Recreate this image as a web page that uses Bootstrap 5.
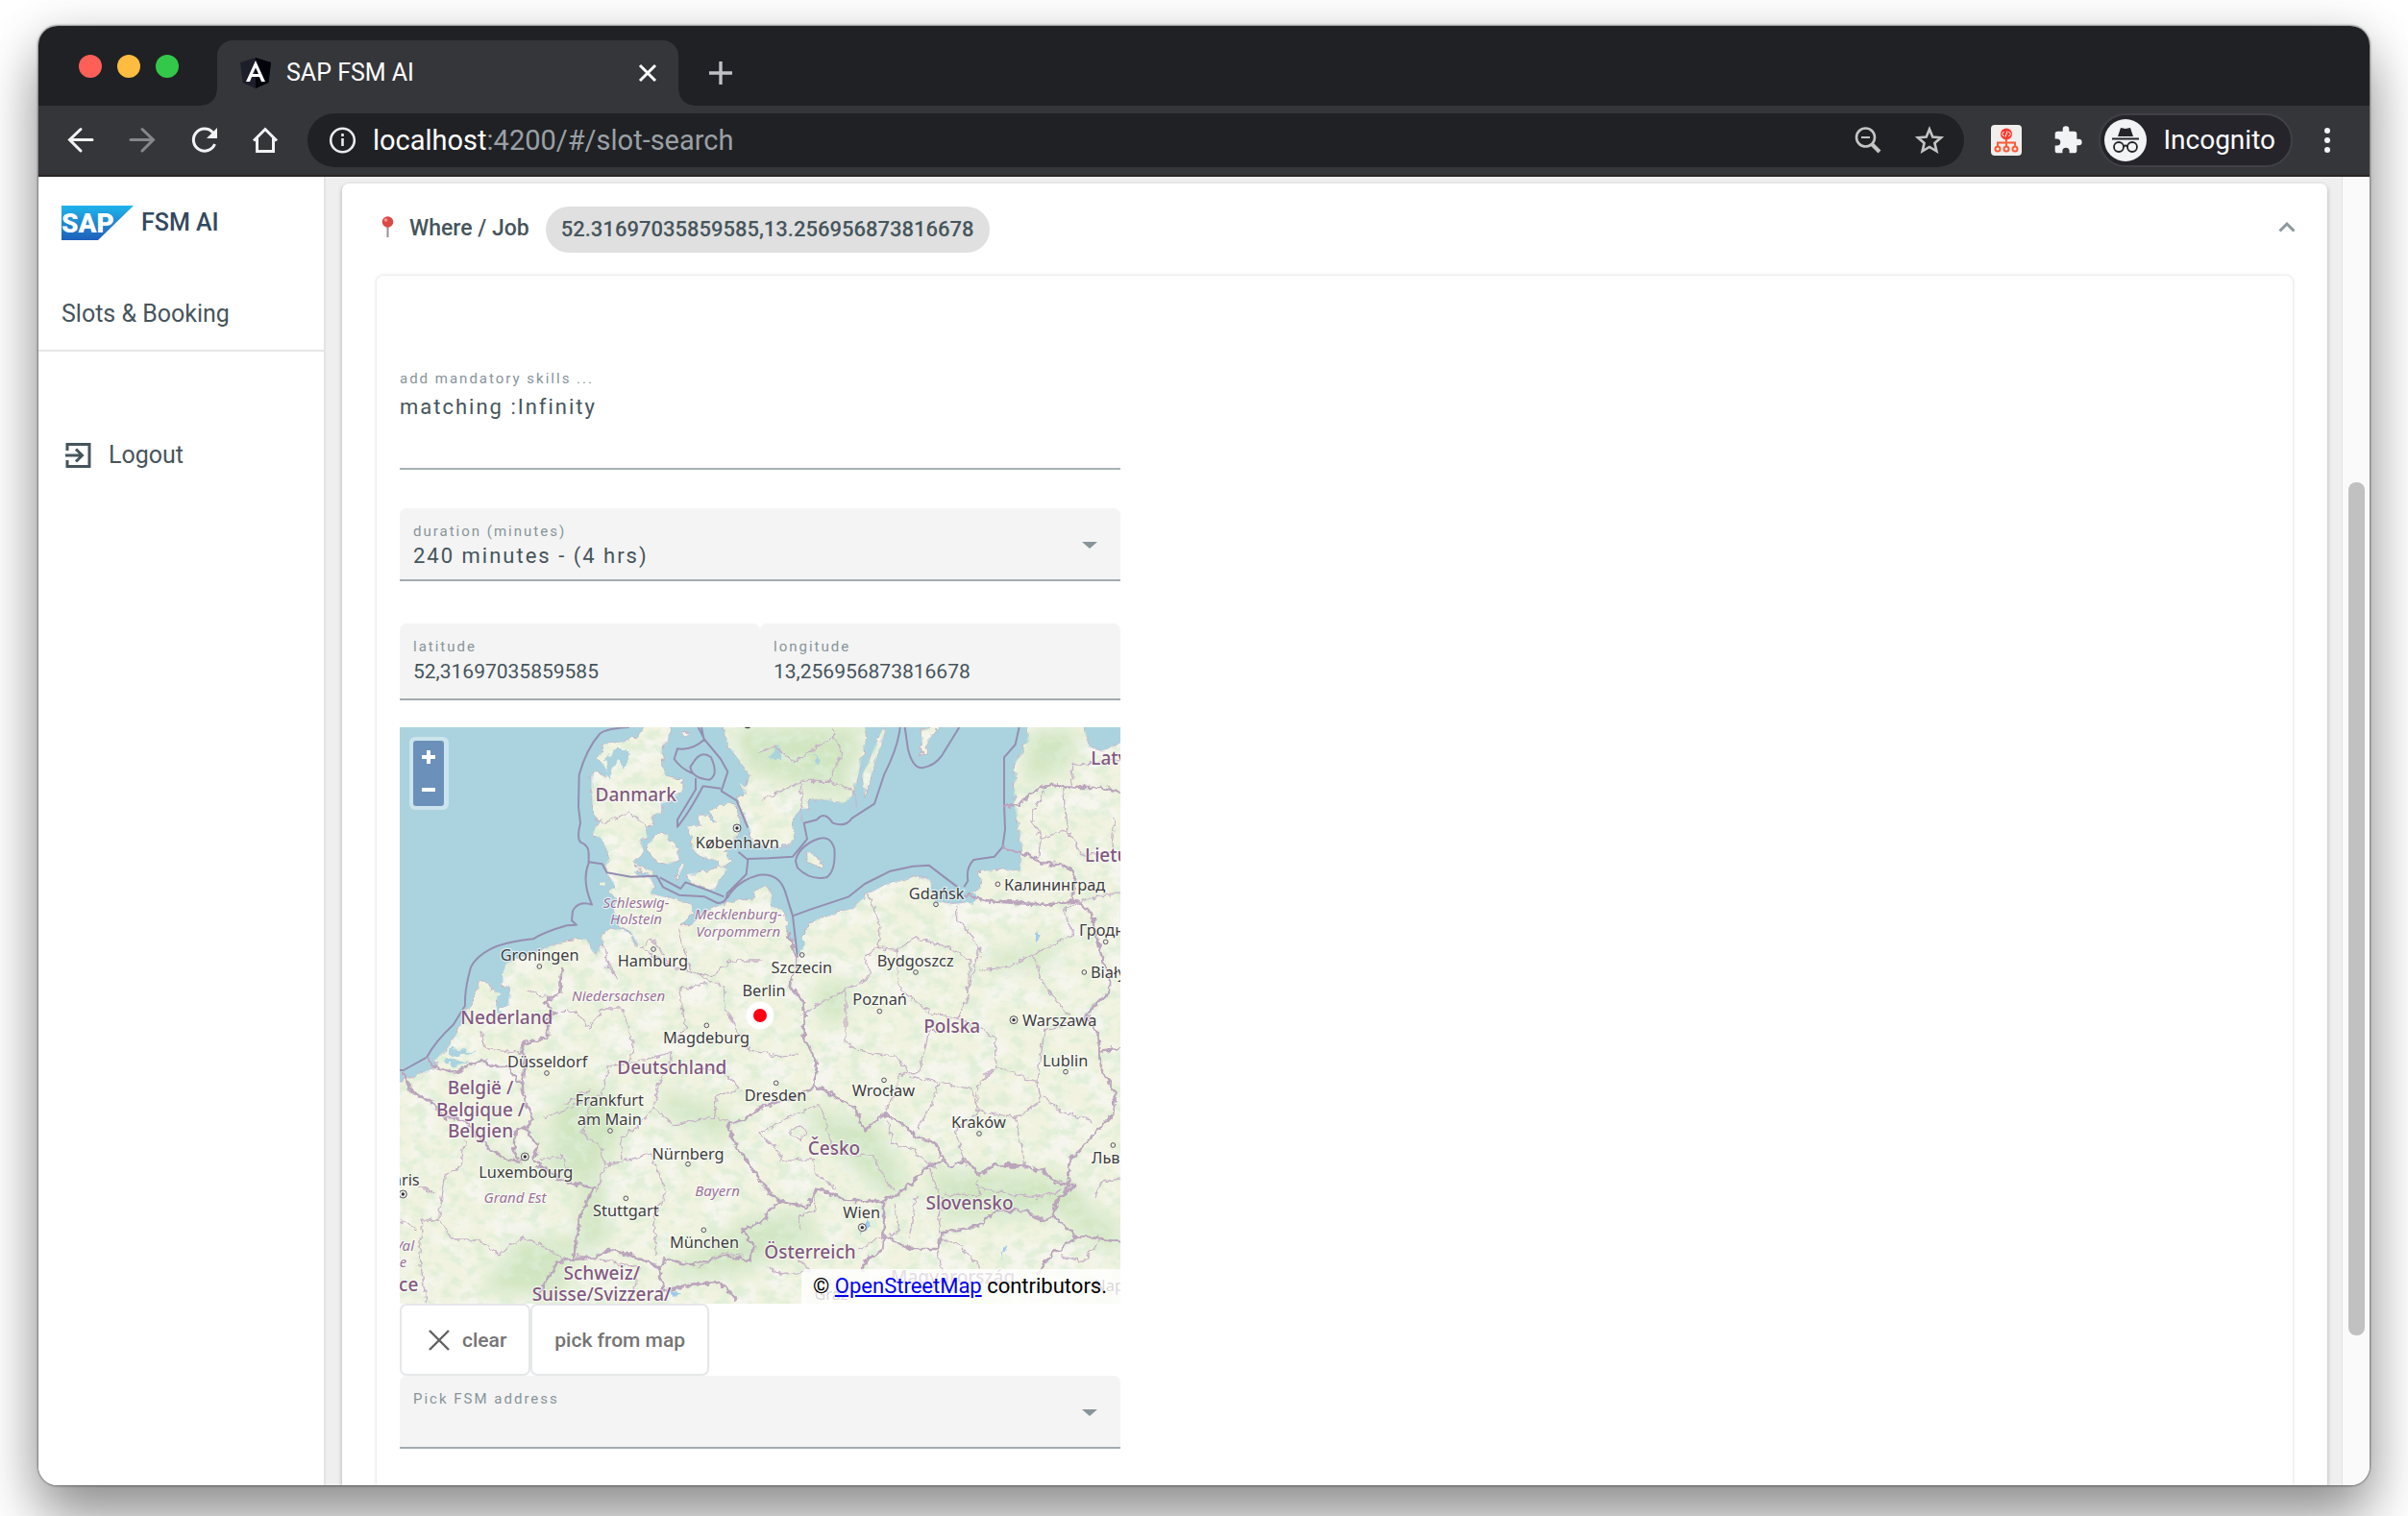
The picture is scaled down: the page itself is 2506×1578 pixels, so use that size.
<!DOCTYPE html>
<html lang="en">
<head>
<meta charset="utf-8">
<meta name="viewport" content="width=device-width, initial-scale=1">
<title>SAP FSM AI</title>
<link href="https://cdn.jsdelivr.net/npm/bootstrap@5.3.0/dist/css/bootstrap.min.css" rel="stylesheet">
<style>
body{font-family:Roboto,"Noto Sans",sans-serif;font-size:24px;line-height:32px;color:#46555c;background:#fff}
svg{display:block;flex:none}
.desk{height:100vh;padding:27px 40px 32px;overflow:hidden}
.win{border-radius:20px;overflow:hidden;background:#fff;box-shadow:0 0 2px 1px rgba(0,0,0,.4),0 36px 60px rgba(0,0,0,.38),0 6px 50px rgba(0,0,0,.14)}
.tabstrip{height:83px;background:#202124}
.lights{gap:16px;padding:30px 40px 0 42px}
.lights button{width:24px;height:24px;border:0;border-radius:50%;padding:0}
.l-close{background:#ff5f57}.l-min{background:#febc40}.l-max{background:#34c84a}
.btab{position:relative;width:480px;height:68px;background:#35363a;border-radius:16px 16px 0 0;color:#fff;padding:0 20px 0 24px;gap:16px;font-size:25px}
.btab::before,.btab::after{content:"";position:absolute;bottom:0;width:16px;height:16px}
.btab::before{left:-16px;background:radial-gradient(circle at 0 0,transparent 15px,#35363a 16px)}
.btab::after{right:-16px;background:radial-gradient(circle at 100% 0,transparent 15px,#35363a 16px)}
.bare{border:0;background:none;padding:0;color:inherit;display:block}
.tools{height:74px;background:#35363a;border-bottom:2px solid #282524;padding:0 32px 0 28px;color:#f1f3f4}
.navs{gap:32px;padding-right:28px}
.omni{height:56px;border-radius:28px;background:#202124;padding:0 20px;gap:16px;font-size:29px}
.host{color:#fff}.path{color:#9aa0a6}
.incog{height:56px;border:2px solid #414046;border-radius:28px;background:#25242a;color:#fff;padding:0 16px 0 4px;gap:17px;font-size:28px}
.side{width:299px;border-right:2px solid #e4e4e4;background:#fff;font-size:25px}
.side a{color:#46555c;text-decoration:none}
.brand{padding:30px 24px 0;gap:8px;color:#33495d;font-weight:500;height:111px}
.brand span{padding-top:2px}
.slots{padding:16px 24px 0;height:71px;border-bottom:2px solid #e6e6e6}
.logout{padding:92px 26px 0;gap:15px}
.stage{background:#efefef;padding:7px 15px 0 17px;overflow:hidden}
.panel{border:0;border-radius:7px 7px 0 0;box-shadow:0 2px 5px rgba(0,0,0,.28);color:#46555c}
.phead{height:96px;flex:none;padding:0 30px 0 37px}
.phead h1{font-size:23px;line-height:30px;font-weight:500;margin:0 17px 2px 14px}
.chip{background:#e0e0e0;height:48px;border-radius:24px;padding:0 16px;font-size:22px;font-weight:500}
.inner{margin:0 36px;border:0;border-radius:7px 7px 0 0;box-shadow:0 0 3px 1px rgba(0,0,0,.1);padding:97px 24px 36px;color:#46555c}
.form{width:100%;max-width:750px}
.fld{background:#f4f4f4;border-bottom:2px solid #a3abaf;border-radius:7px 7px 0 0;padding:14px 24px 0 14px;height:76px}
.fld label,.skill label{display:block;font-size:15px;line-height:20px;letter-spacing:2px;color:#87949a}
.fld select,.fld input,.skill input{display:block;width:100%;border:0;background:none;padding:0;margin:0;appearance:none;outline:0;color:#46555c;font-size:22px;line-height:32px;height:32px}
.fld select,.skill input{letter-spacing:2px}
.fld input{font-size:21px}
.skill{height:105px;border-bottom:2px solid #a8b0b4;margin-bottom:40px}
.skill input{margin-top:4px}
.latlon{margin-top:44px}
.latlon .fld{height:80px}
.map{position:relative;margin-top:28px}
.map>svg{width:100%;height:auto}
.zoomer{position:absolute;left:10px;top:10px;padding:4px 5px 4px 4px;background:rgba(255,255,255,.4);border-radius:6px}
.zoomer button{display:block;width:32px;height:34px;border:0;padding:0;background:#6b91bb;color:#fff}
.zoomer button:first-child{border-radius:3px 3px 0 0}
.zoomer button:last-child{border-radius:0 0 3px 3px}
.zoomer svg{margin:auto}
.attr{position:absolute;right:0;bottom:0;background:rgba(255,255,255,.8);border-radius:6px 0 0 0;padding:0 14px 0 12px;line-height:36px;font-size:22px;color:#000}
.attr a{color:#00e}
.abtn{border:2px solid #e6e7e9;border-radius:7px;background:#fff;color:#757575;font-size:21px;font-weight:500;padding:0 23px;height:75px}
.track{width:29px;background:#fafafa;border-left:1px solid #e2e2e2;padding:318px 5px 0 6px}
.thumb{height:888px;border-radius:8px;background:#c1c1c1}
.cty{font:500 57px "Noto Sans",sans-serif;fill:#825980}
.cit{font:49px "Noto Sans",sans-serif;fill:#3d3d3d}
.rgn{font:italic 45px "Noto Sans",sans-serif;fill:#9a7399}
.map text{paint-order:stroke;stroke:rgba(255,255,255,.65);stroke-width:7px;stroke-linejoin:round;text-anchor:middle}
</style>
<script src="https://cdn.jsdelivr.net/npm/bootstrap@5.3.0/dist/js/bootstrap.bundle.min.js"></script>
</head>
<body>
<div class="desk">
<div class="win d-flex flex-column h-100">
  <header>
    <div class="tabstrip d-flex">
      <div class="lights d-flex"><button class="l-close" aria-label="Close"></button><button class="l-min" aria-label="Minimize"></button><button class="l-max" aria-label="Maximize"></button></div>
      <div class="btab d-flex align-items-center align-self-end">
        <svg width="32" height="32" viewBox="0 0 32 32"><path fill="#1c1f2a" d="M16 0 32 5 29.500 26 16 32 2.500 26 0 5z"/><path fill="#02040b" d="M16 0 32 5 29.500 26 16 32z"/><path fill="#fff" d="M16 3 6 25h4l2-5h8l2 5h4zM16 10.500l3 6.500h-6z"/></svg>
        <span class="flex-grow-1">SAP FSM AI</span>
        <button class="bare" aria-label="Close tab"><svg width="24" height="24" viewBox="0 0 24 24" stroke="#fff" stroke-width="3"><path d="M4 4 20 20M20 4 4 20"/></svg></button>
      </div>
      <button class="bare ms-4 mt-4 ps-2 align-self-start" aria-label="New tab"><svg width="24" height="50" viewBox="0 0 24 50" stroke="#bdc1c6" stroke-width="3.4"><path d="M0 25h24M12 13v24"/></svg></button>
    </div>
    <div class="tools d-flex align-items-center">
      <div class="navs d-flex">
        <button class="bare" aria-label="Back"><svg width="32" height="32" viewBox="0 0 32 32" fill="none" stroke="currentColor" stroke-width="3" stroke-linecap="round"><path d="M28 15.500H5M16 4.500 4.500 15.500 16 27"/></svg></button>
        <button class="bare" aria-label="Forward"><svg width="32" height="32" viewBox="0 0 32 32" fill="none" stroke="#85878a" stroke-width="3" stroke-linecap="round"><path d="M4 15.500h23M16 4.500l11.500 11L16 27"/></svg></button>
        <button class="bare" aria-label="Reload"><svg width="32" height="32" viewBox="0 0 32 32" fill="none" stroke="currentColor" stroke-width="3"><path d="M27.500 20A11.500 11.500 0 1 1 25.500 8"/><path fill="currentColor" stroke="none" d="M30 3v11H19z"/></svg></button>
        <button class="bare" aria-label="Home"><svg width="32" height="32" viewBox="0 0 32 32" fill="none" stroke="currentColor" stroke-width="3"><path d="M4 16.500 16 4.500l12 12M7.500 14v13.500h17V14"/></svg></button>
      </div>
      <div class="omni d-flex align-items-center flex-grow-1">
        <svg width="32" height="32" viewBox="0 0 32 32" fill="none" stroke="#e8eaed" stroke-width="2.600"><circle cx="16.500" cy="16" r="12.300"/><path d="M16.500 14v8M16.500 9v3"/></svg>
        <div class="flex-grow-1"><span class="host">localhost</span><span class="path">:4200/#/slot-search</span></div>
        <button class="bare" aria-label="Zoom"><svg width="32" height="32" viewBox="0 0 32 32" fill="none" stroke="#c4c4c5" stroke-width="2.600"><circle cx="13.500" cy="13" r="9.500"/><path d="M20 20l8 8" stroke-width="4"/><path d="M9 13h9" stroke-width="2"/></svg></button>
        <button class="bare ms-3" aria-label="Bookmark"><svg width="32" height="32" viewBox="0 0 32 32" fill="none" stroke="#c4c4c5" stroke-width="2.600"><path d="M16 4.500l3.300 8 8.700.7-6.600 5.700 2 8.500L16 22.900l-7.400 4.500 2-8.500L4 13.200l8.700-.7z"/></svg></button>
      </div>
      <button class="bare ms-4 ps-1" aria-label="Extension"><svg width="32" height="32" viewBox="0 0 32 32"><rect width="32" height="32" rx="4" fill="#f1efed"/><g fill="none" stroke="#ff5a36" stroke-width="2"><path d="M16 14v9M7 23v-4.500h18V23"/><circle cx="7" cy="25" r="2.500"/><circle cx="16" cy="25" r="2.500"/><circle cx="25" cy="25" r="2.500"/></g><circle cx="16" cy="9.500" r="6" fill="#fb3b30"/><path d="M13.500 7 11.500 9.500l2 2.500M18.500 7l2 2.500-2 2.500M17 6.500l-2 6" fill="none" stroke="#fff"/></svg></button>
      <button class="bare ms-4 ps-2" aria-label="Extensions"><svg width="32" height="32" viewBox="0 0 24 24" fill="#f1f3f4"><path d="M20.500 11H19V7a2 2 0 0 0-2-2h-4V3.500a2.500 2.500 0 0 0-5 0V5H4a2 2 0 0 0-2 2v3.800h1.500a2.700 2.700 0 0 1 0 5.400H2V20a2 2 0 0 0 2 2h3.800v-1.500a2.700 2.700 0 0 1 5.400 0V22H17a2 2 0 0 0 2-2v-4h1.500a2.500 2.500 0 0 0 0-5z"/></svg></button>
      <button class="incog d-flex align-items-center ms-3"><svg width="44" height="44" viewBox="0 0 44 44"><circle cx="22" cy="22" r="22" fill="#f1f3f4"/><path fill="#25242a" d="M14 18 17 9l5 1 5-1 3 9z"/><path stroke="#25242a" stroke-width="2" d="M8 20.500h28"/><g fill="none" stroke="#25242a" stroke-width="1.800"><circle cx="15" cy="29" r="5"/><circle cx="29" cy="29" r="5"/><path d="M20 28.500q2-2 4 0"/></g></svg>Incognito</button>
      <button class="bare ms-4" aria-label="Menu"><svg width="24" height="32" viewBox="0 0 24 32" fill="#f1f3f4"><circle cx="12" cy="6" r="3"/><circle cx="12" cy="16" r="3"/><circle cx="12" cy="26" r="3"/></svg></button>
    </div>
  </header>
  <div class="d-flex flex-grow-1 overflow-hidden">
    <nav class="side flex-shrink-0">
      <div class="brand d-flex"><svg width="75" height="36" viewBox="0 0 75 36"><defs><linearGradient id="sg" x2="0" y2="1"><stop stop-color="#1fb4ea"/><stop offset="1" stop-color="#1e5fbb"/></linearGradient></defs><path fill="url(#sg)" d="M0 0h75L38 36H0z"/><text x="0" y="28" font-family="Roboto,sans-serif" font-weight="900" font-size="28" fill="#fff">SAP</text></svg><span>FSM AI</span></div>
      <div class="slots"><a href="#">Slots &amp; Booking</a></div>
      <a class="logout d-flex" href="#"><svg width="32" height="32" viewBox="0 0 32 32" fill="none" stroke="currentColor" stroke-width="3"><path d="M4 11V4.500h23v23H4V21M2 16h17M13 9.500l6.500 6.500-6.500 6.500"/></svg>Logout</a>
    </nav>
    <main class="stage flex-grow-1 d-flex">
      <section class="card panel w-100">
        <div class="phead d-flex align-items-center">
          <svg width="19" height="32" viewBox="0 0 19 32"><path d="M10.500 12v12" stroke="#9b8f8c" stroke-width="2"/><circle cx="10.500" cy="8" r="5.800" fill="#dc4a48"/><circle cx="8.500" cy="6" r="1.800" fill="#f29a94"/></svg>
          <h1>Where / Job</h1>
          <span class="chip d-flex align-items-center">52.31697035859585,13.256956873816678</span>
          <button class="bare ms-auto" aria-label="Collapse"><svg width="24" height="28" viewBox="0 0 24 28" fill="none" stroke="#8c989d" stroke-width="3"><path d="M4.500 15.500l7.500-7.500 7.500 7.500"/></svg></button>
        </div>
        <div class="card inner flex-grow-1">
          <form class="form">
            <div class="skill"><label for="sk">add mandatory skills ...</label><input id="sk" value="matching :Infinity"></div>
            <div class="fld d-flex"><div class="flex-grow-1"><label for="du">duration (minutes)</label><select id="du"><option>240 minutes - (4 hrs)</option></select></div><svg class="mt-3" width="16" height="20" viewBox="0 0 16 20"><path fill="#87949a" d="M0 5h16l-8 7z"/></svg></div>
            <div class="latlon d-flex">
              <div class="fld w-50"><label for="la">latitude</label><input id="la" value="52,31697035859585"></div>
              <div class="fld w-50"><label for="lo">longitude</label><input id="lo" value="13,256956873816678"></div>
            </div>
            <div class="map">
<svg viewBox="48 51 2250 1800" role="img" aria-label="Map">
<defs>
<path id="land" d="M48 1160 105 1135 165 1112 158 1088 200 1050 228 1005 246 960 290 870 295 845 330 850 335 875 365 882 345 905 355 930 385 925 392 865 368 858 370 820 380 790 450 760 500 742 550 722 630 712 645 740 660 762 672 735 686 740 680 700 700 685 745 682 765 695 785 735 790 728 768 688 730 670 742 650 715 625 725 590 700 560 722 550 695 505 688 480 705 455 678 400 650 380 670 345 650 320 645 200 660 188 690 208 700 190 665 150 690 102 760 95 800 70 815 35 893 35 885 95 865 110 870 180 880 205 930 215 930 245 900 280 865 290 865 320 832 325 842 355 815 365 822 400 800 400 810 440 780 470 800 490 780 510 830 520 842 545 830 570 870 580 950 600 965 625 940 655 922 668 962 668 1000 628 1040 610 1100 590 1150 590 1160 560 1190 545 1210 575 1205 610 1240 620 1262 660 1252 690 1275 720 1310 710 1320 670 1350 652 1460 617 1510 570 1570 540 1660 517 1700 525 1712 555 1718 592 1770 602 1812 600 1840 570 1862 545 1856 500 1930 495 1985 500 1990 430 1980 370 1965 280 1970 160 2005 100 2015 35 2182 35 2200 110 2235 125 2280 110 2330 80V1900H20V1170zM1055 35 1075 110 1105 150 1140 200 1130 240 1108 225 1125 260 1100 270 1120 320 1140 370 1150 410 1200 425 1270 418 1282 380 1268 345 1300 305 1325 305 1320 275 1380 278 1430 290 1460 270 1475 220 1490 150 1505 90 1500 35zM945 360 985 358 980 330 1010 320 1022 348 1035 345 1012 312 1070 285 1097 295 1110 330 1105 380 1085 420 1060 440 1082 470 1055 490 1040 470 990 455 960 430 962 400zM945 510 1000 500 1050 480 1070 495 1050 520 1030 562 960 540zM820 420 850 385 885 385 890 405 915 430 920 465 885 480 850 470 830 450zM1555 55 1565 60 1520 200 1500 268 1492 200 1515 150zM1675 60 1735 45 1700 90 1690 130 1675 138 1678 100zM1320 440 1365 465 1360 490 1320 470zM780 480 840 500 835 515 800 500zM930 475 935 480 915 530 908 520zM925 70 955 65 935 82zM672 535 690 535 690 545 672 545z"/>
<clipPath id="lc"><use href="#land"/></clipPath>
<filter id="wob" x="0" y="0" width="2400" height="1950" filterUnits="userSpaceOnUse"><feTurbulence type="fractalNoise" baseFrequency=".05" numOctaves="2" seed="4"/><feDisplacementMap in="SourceGraphic" scale="24" xChannelSelector="R" yChannelSelector="G"/></filter>
<filter id="n1" x="0%" y="0%" width="100%" height="100%"><feTurbulence type="fractalNoise" baseFrequency=".022 .03" numOctaves="5" seed="8"/><feColorMatrix values="0 0 0 0 .72  0 0 0 0 .85  0 0 0 0 .66  0 4 0 0 -1.800"/></filter>
<filter id="n2" x="0%" y="0%" width="100%" height="100%"><feTurbulence type="fractalNoise" baseFrequency=".012" numOctaves="4" seed="3"/><feColorMatrix values="0 0 0 0 .94  0 0 0 0 .93  0 0 0 0 .91  4 0 0 0 -1.700"/></filter>
<filter id="bl"><feGaussianBlur stdDeviation="28"/></filter>
</defs>
<rect x="48" y="51" width="2250" height="1800" fill="#aad3df"/>
<g filter="url(#wob)"><use href="#land" fill="#f1f3e0" stroke="#c1b3c6" stroke-width="3"/></g>
<g clip-path="url(#lc)">
<rect x="48" y="51" width="2250" height="1800" filter="url(#n2)" opacity=".7"/>
<g fill="#b5daa6" opacity=".55" filter="url(#bl)"><path d="M1080 51h420l-60 220-120-20-80-40-100-20zM540 1180l160 0 60 100-100 180-160 0zM620 1450l60 0 20 200-100 60zM860 1180l230 80-20 80-180-60zM1280 1230l260 60 100 200-60 40-200-180zM1700 1430l420 20 100 100-80 20-400 20zM1150 1580l180-20 20 100-260 100-240 20 80-60zM1880 760l240-30-40 60-160 20zM250 1360l220 60-80 40zM420 1650l180 0-40 180-260-20zM2080 1500l210 100 0 100-140-80zM2010 60l160 0-20 100-150 80zM1350 850l120 0-30 120-80 0z"/></g>
<rect x="48" y="51" width="2250" height="1800" filter="url(#n1)" opacity=".75"/>
</g>
<g fill="#aad3df" filter="url(#wob)"><path d="M655 160l50 30 10 25-30-20zM690 150l30-30 50 0-20 60-20-30-30 50zM1200 145l30-40 10 50zM1340 130l20 30-10 10zM1260 690l50 10 0 35-20 25-10-40zM200 1055l90 10-80 15zM180 1085l90 10-60 15zM345 890l40 0-30 60zM1800 590l50-20-10 30z"/><path d="M2030 690l15 10-10 25zM1485 1640l25-60 5 30zM1920 1715l20-45 5 5zM880 1800l50 20-30 10z" fill="#9fcbe8"/></g>
<g fill="none" stroke-linejoin="round">
<g stroke="#958eb0" stroke-width="6">
<path d="M765 51Q690 55 672 72 630 120 608 200L606 300 612 350Q600 395 612 410 640 420 638 450L638 475Q615 530 648 605 605 590 588 625L585 655 600 668 570 670Q500 690 465 712 400 718 350 735 290 760 270 800 250 870 252 920L215 980Q160 1030 132 1082L60 1122 48 1122"/>
<path d="M638 472 680 478 695 505 770 518 850 515 870 550 920 575 1000 580 1040 600Q1070 600 1070 570L1130 510 1135 465 1105 440M1070 585Q1100 530 1170 512 1230 505 1250 560L1275 640 1290 770M860 520 925 555 940 535 1010 560 1060 580M980 51 1000 90 1050 150 1072 190 1052 250 1100 280 1135 365M990 51 998 90Q960 125 915 118L905 150Q925 180 962 195M965 160Q990 120 1020 145 1045 200 1015 215 960 210 955 175zM972 210 972 245 915 340 915 362Q950 320 995 235L1050 242M1135 462 1200 460 1275 455 1320 400 1310 350 1350 340Q1375 310 1400 350 1440 365 1460 335L1530 290 1560 200Q1605 110 1610 51M1625 51 1635 120Q1650 180 1680 178 1720 170 1740 140L1795 51M1982 51 1970 105 1935 145 1935 290 1938 370 1930 425 1905 455 1840 465Q1815 490 1822 530L1810 550M1284 470Q1290 430 1340 405 1390 380 1405 430 1410 500 1380 520 1330 530 1290 490zM1275 640 1330 620 1450 580 1500 540 1580 500 1650 485 1700 482 1750 520 1790 550"/></g>
<g filter="url(#wob)">
<g stroke="#bba5bd" stroke-width="8">
<path d="M1935 297 1985 293 2010 260 2080 230 2170 240 2240 240 2310 255M1930 425 1980 440 2060 475 2130 485 2155 510 2150 595M1810 575 1900 595 2060 605 2160 595 2210 630 2220 690 2245 790 2265 820 2265 880 2220 920 2190 950 2230 1010 2235 1110 2280 1195 2275 1260 2200 1340 2135 1410 2140 1480 2100 1530 2085 1580M2230 1065 2310 1050"/>
<path d="M1262 690 1290 780 1265 860 1310 910 1310 1020 1350 1100 1345 1170 1310 1195M1345 1170 1400 1200 1470 1240 1500 1310 1560 1260 1620 1290 1660 1330 1720 1350 1750 1410 1700 1420 1660 1460 1600 1510 1550 1530M1310 1195 1170 1240 1120 1280 1070 1290 1100 1360 1200 1500 1240 1530 1320 1550 1350 1490 1450 1530 1560 1530 1560 1610 1555 1680 1500 1720 1490 1750M1750 1410 1770 1425 1810 1400 1860 1450 1900 1420 2000 1420 2060 1440 2100 1475 2160 1480M1240 1530 1200 1560 1190 1590 1120 1620 1155 1680 1140 1715 1060 1700 960 1730 880 1710 860 1740 800 1710 700 1680 660 1705 590 1710"/>
<path d="M132 1082 160 1115 220 1130 300 1090 340 1110 380 1110 430 1170 440 1230 465 1270 440 1300 480 1360 465 1405M430 1180 440 1110 430 1040 510 1020 510 970 535 945 500 910 550 880 552 800M60 1122 85 1190 150 1220 190 1270 250 1280 310 1350 380 1400 430 1410M440 1300 410 1310 405 1380 420 1400M465 1405 560 1470 655 1490 610 1580 590 1710 540 1720 480 1830M860 1740 870 1810 960 1790 1050 1785 1100 1840M1560 1640 1640 1680 1730 1680 1740 1630 1850 1610 1910 1560 2000 1560 2050 1590 2090 1580 2160 1640 2310 1655M2160 1640 2060 1720 2040 1760M2105 1520 2160 1480"/></g>
<g stroke="#c7b2c8" stroke-width="4">
<path d="M650 340 700 345 765 315 820 365M890 795 860 740 830 710 800 740 890 795 1020 830 1080 780 1180 780M920 680 930 720 950 800 1010 840 1060 860 1065 930 1100 1000 1140 1060 1240 1080 1290 1070M1010 850 920 870 930 920 940 990 900 1040M690 740 700 800 730 830 690 800M440 870 520 900 550 880M300 1000 310 1050 430 1070M550 940 600 940 640 990 680 930 740 930 780 1050 760 1100 700 1110 680 1200 600 1230 500 1270M760 1100 850 1080 900 1070 850 1190 840 1240 900 1290 1030 1270 1040 1200 1110 1180 1060 1130 980 1110M640 1230 620 1320 670 1360 690 1420 740 1410 740 1330 790 1300 840 1240M690 1420 660 1500M740 1410 830 1380 880 1500 840 1580 850 1700M1040 1270 1100 1290M250 1340 240 1420 190 1450 170 1590 210 1650 290 1650 360 1700 430 1640 530 1690 560 1720M170 1590 120 1590 110 1700 130 1850M48 1590 100 1620M100 1480 160 1510"/>
<path d="M1170 130 1220 110 1280 160 1400 80 1400 51M1400 80 1430 130 1390 220 1300 220 1180 280M1300 220 1305 350M1390 220 1470 250 1475 310M1510 570 1550 680 1540 740 1600 745 1660 710 1770 740 1830 780 1820 880 1860 740 1790 650 1790 610M1860 810 1940 800 2030 760 2150 700 2120 620 2180 595M2030 760 2050 840 2110 920 2140 950M1540 740 1500 770 1520 830 1440 870 1300 950M1600 745 1610 870 1700 940 1790 960 1830 880M1440 870 1440 1030 1480 1060 1600 1080 1640 1130 1670 1130 1700 1000 1800 1000M1790 960 1910 1020 1910 1110 1850 1170 1850 1250 1970 1270 2000 1430M1910 1110 2040 1160 2060 1000 2190 960M2040 1160 2050 1220 1970 1270M2050 1200 2110 1250 2210 1280M1640 1130 1610 1140 1590 1200 1560 1260M1640 1140 1730 1160 1700 1250 1660 1310M1730 1160 1830 1180 1860 1250 1780 1310 1820 1420M1170 1320 1280 1260 1360 1230 1390 1320 1400 1380 1530 1390 1540 1420 1590 1500M1170 1320 1230 1370 1240 1405 1340 1400 1350 1450 1410 1490M1270 1310 1300 1295 1320 1320 1300 1340 1275 1330zM1570 1280 1590 1350 1650 1370 1720 1430M1700 1430 1740 1520 1730 1630M1860 1490 1900 1500 2030 1520 2110 1500M1660 1520 1640 1640M1590 1540 1610 1620 1580 1640M1850 1470 1860 1510 1750 1510M1340 1500 1350 1560 1290 1580 1300 1620M1280 1700 1330 1750 1240 1760 1200 1740M1560 1640 1480 1680M1730 1680 1740 1750M1740 1650 1800 1670 1860 1740M2145 240 2150 170 2310 150M2060 250 2020 330 2050 400 2130 370 2120 240M2130 370 2180 450 2270 440 2280 330M2050 400 2040 470M2160 595 2230 580 2310 565M2220 1520 2240 1470 2310 1460M2110 1700 2180 1720 2240 1650M560 1230 640 1180M600 1700 720 1720 800 1740 760 1850M980 1740 1060 1690 1120 1700M480 1400 560 1390 570 1440"/></g>
</g></g>
<g fill="#eee" stroke="#555" stroke-width="3"><g><circle cx="484" cy="798" r="7"/><circle cx="840" cy="744" r="7"/><circle cx="1304" cy="762" r="7"/><circle cx="1722" cy="604" r="7"/><circle cx="1915" cy="541" r="7"/><circle cx="1659" cy="816" r="7"/><circle cx="1546" cy="938" r="7"/><circle cx="2252" cy="721" r="7"/><circle cx="2185" cy="816" r="7"/><circle cx="1006" cy="982" r="7"/><circle cx="507" cy="1131" r="7"/><circle cx="705" cy="1311" r="7"/><circle cx="948" cy="1415" r="7"/><circle cx="754" cy="1522" r="7"/><circle cx="997" cy="1621" r="7"/><circle cx="1223" cy="1162" r="7"/><circle cx="1560" cy="1153" r="7"/><circle cx="1857" cy="1320" r="7"/><circle cx="2127" cy="1127" r="7"/><circle cx="2275" cy="1356" r="7"/></g>
<g><circle cx="1101" cy="366" r="12"/><circle cx="439" cy="1392" r="12"/><circle cx="58" cy="1509" r="12"/><circle cx="1965" cy="965" r="12"/><circle cx="1492" cy="1613" r="12"/></g></g>
<g fill="#333"><circle cx="1101" cy="366" r="5"/><circle cx="439" cy="1392" r="5"/><circle cx="58" cy="1509" r="5"/><circle cx="1965" cy="965" r="5"/><circle cx="1492" cy="1613" r="5"/><path d="M1124 51h20q-10 8-20 0z"/></g>
<g class="cty"><text x="785" y="282">Danmark</text><text x="382" y="978">Nederland</text><text x="300" y="1198">België /</text><text x="300" y="1266">Belgique /</text><text x="300" y="1333">Belgien</text><text x="898" y="1133">Deutschland</text><text x="1772" y="1004">Polska</text><text x="1404" y="1385">Česko</text><text x="1827" y="1558">Slovensko</text><text x="1329" y="1711">Österreich</text><text x="679" y="1775">Schweiz/</text><text x="678" y="1841">Suisse/Svizzera/</text><text x="1775" y="1787">Magyarország</text><text x="2206" y="167" style="text-anchor:start">Latvija</text><text x="2187" y="472" style="text-anchor:start">Lietuva</text><text x="106" y="1812" style="text-anchor:end">France</text></g>
<g class="cit"><text x="1102" y="429">København</text><text x="485" y="781">Groningen</text><text x="838" y="798">Hamburg</text><text x="1303" y="820">Szczecin</text><text x="1185" y="892">Berlin</text><text x="1724" y="587">Gdańsk</text><text x="2093" y="560">Калининград</text><text x="1658" y="799">Bydgoszcz</text><text x="1547" y="919">Poznań</text><text x="2108" y="985">Warszawa</text><text x="2169" y="703" style="text-anchor:start">Гродна</text><text x="2205" y="833" style="text-anchor:start">Białystok</text><text x="1005" y="1039">Magdeburg</text><text x="509" y="1113">Düsseldorf</text><text x="703" y="1233">Frankfurt</text><text x="703" y="1294">am Main</text><text x="948" y="1400">Nürnberg</text><text x="442" y="1458">Luxembourg</text><text x="754" y="1579">Stuttgart</text><text x="999" y="1678">München</text><text x="1221" y="1217">Dresden</text><text x="1558" y="1204">Wrocław</text><text x="1855" y="1302">Kraków</text><text x="2126" y="1110">Lublin</text><text x="1490" y="1583">Wien</text><text x="2208" y="1412" style="text-anchor:start">Львів</text><text x="110" y="1483" style="text-anchor:end">Paris</text><text x="1395" y="1840">Graz</text><text x="2215" y="1812" style="text-anchor:start">Napoca</text></g>
<g class="rgn"><text x="786" y="614">Schleswig-</text><text x="786" y="667">Holstein</text><text x="1105" y="651">Mecklenburg-</text><text x="1105" y="704">Vorpommern</text><text x="731" y="907">Niedersachsen</text><text x="408" y="1535">Grand Est</text><text x="1040" y="1515">Bayern</text><text x="93" y="1685" style="text-anchor:end">Val</text><text x="70" y="1738" style="text-anchor:end">de</text></g>
<circle cx="1173" cy="951" r="43" fill="#fff"/><circle cx="1173" cy="951" r="21" fill="#fb0013"/>
</svg>
              <div class="zoomer"><button type="button" aria-label="Zoom in"><svg width="14" height="14" viewBox="0 0 14 14" stroke="#fff" stroke-width="4"><path d="M0 7h14M7 0v14"/></svg></button><button type="button" aria-label="Zoom out"><svg width="14" height="14" viewBox="0 0 14 14" stroke="#fff" stroke-width="4"><path d="M0 7h14"/></svg></button></div>
              <div class="attr">© <a href="#">OpenStreetMap</a> contributors.</div>
            </div>
            <div class="d-flex"><button type="button" class="abtn d-flex align-items-center gap-2"><svg width="32" height="32" viewBox="0 0 32 32" stroke="#616161" stroke-width="2.400"><path d="M6 6l20 20M26 6 6 26"/></svg>clear</button><button type="button" class="abtn">pick from map</button></div>
            <div class="fld d-flex"><div class="flex-grow-1"><label for="ad">Pick FSM address</label><select id="ad"><option></option></select></div><svg class="mt-3" width="16" height="20" viewBox="0 0 16 20"><path fill="#87949a" d="M0 5h16l-8 7z"/></svg></div>
          </form>
        </div>
      </section>
    </main>
    <div class="track flex-shrink-0"><div class="thumb"></div></div>
  </div>
</div>
</div>
</body>
</html>
